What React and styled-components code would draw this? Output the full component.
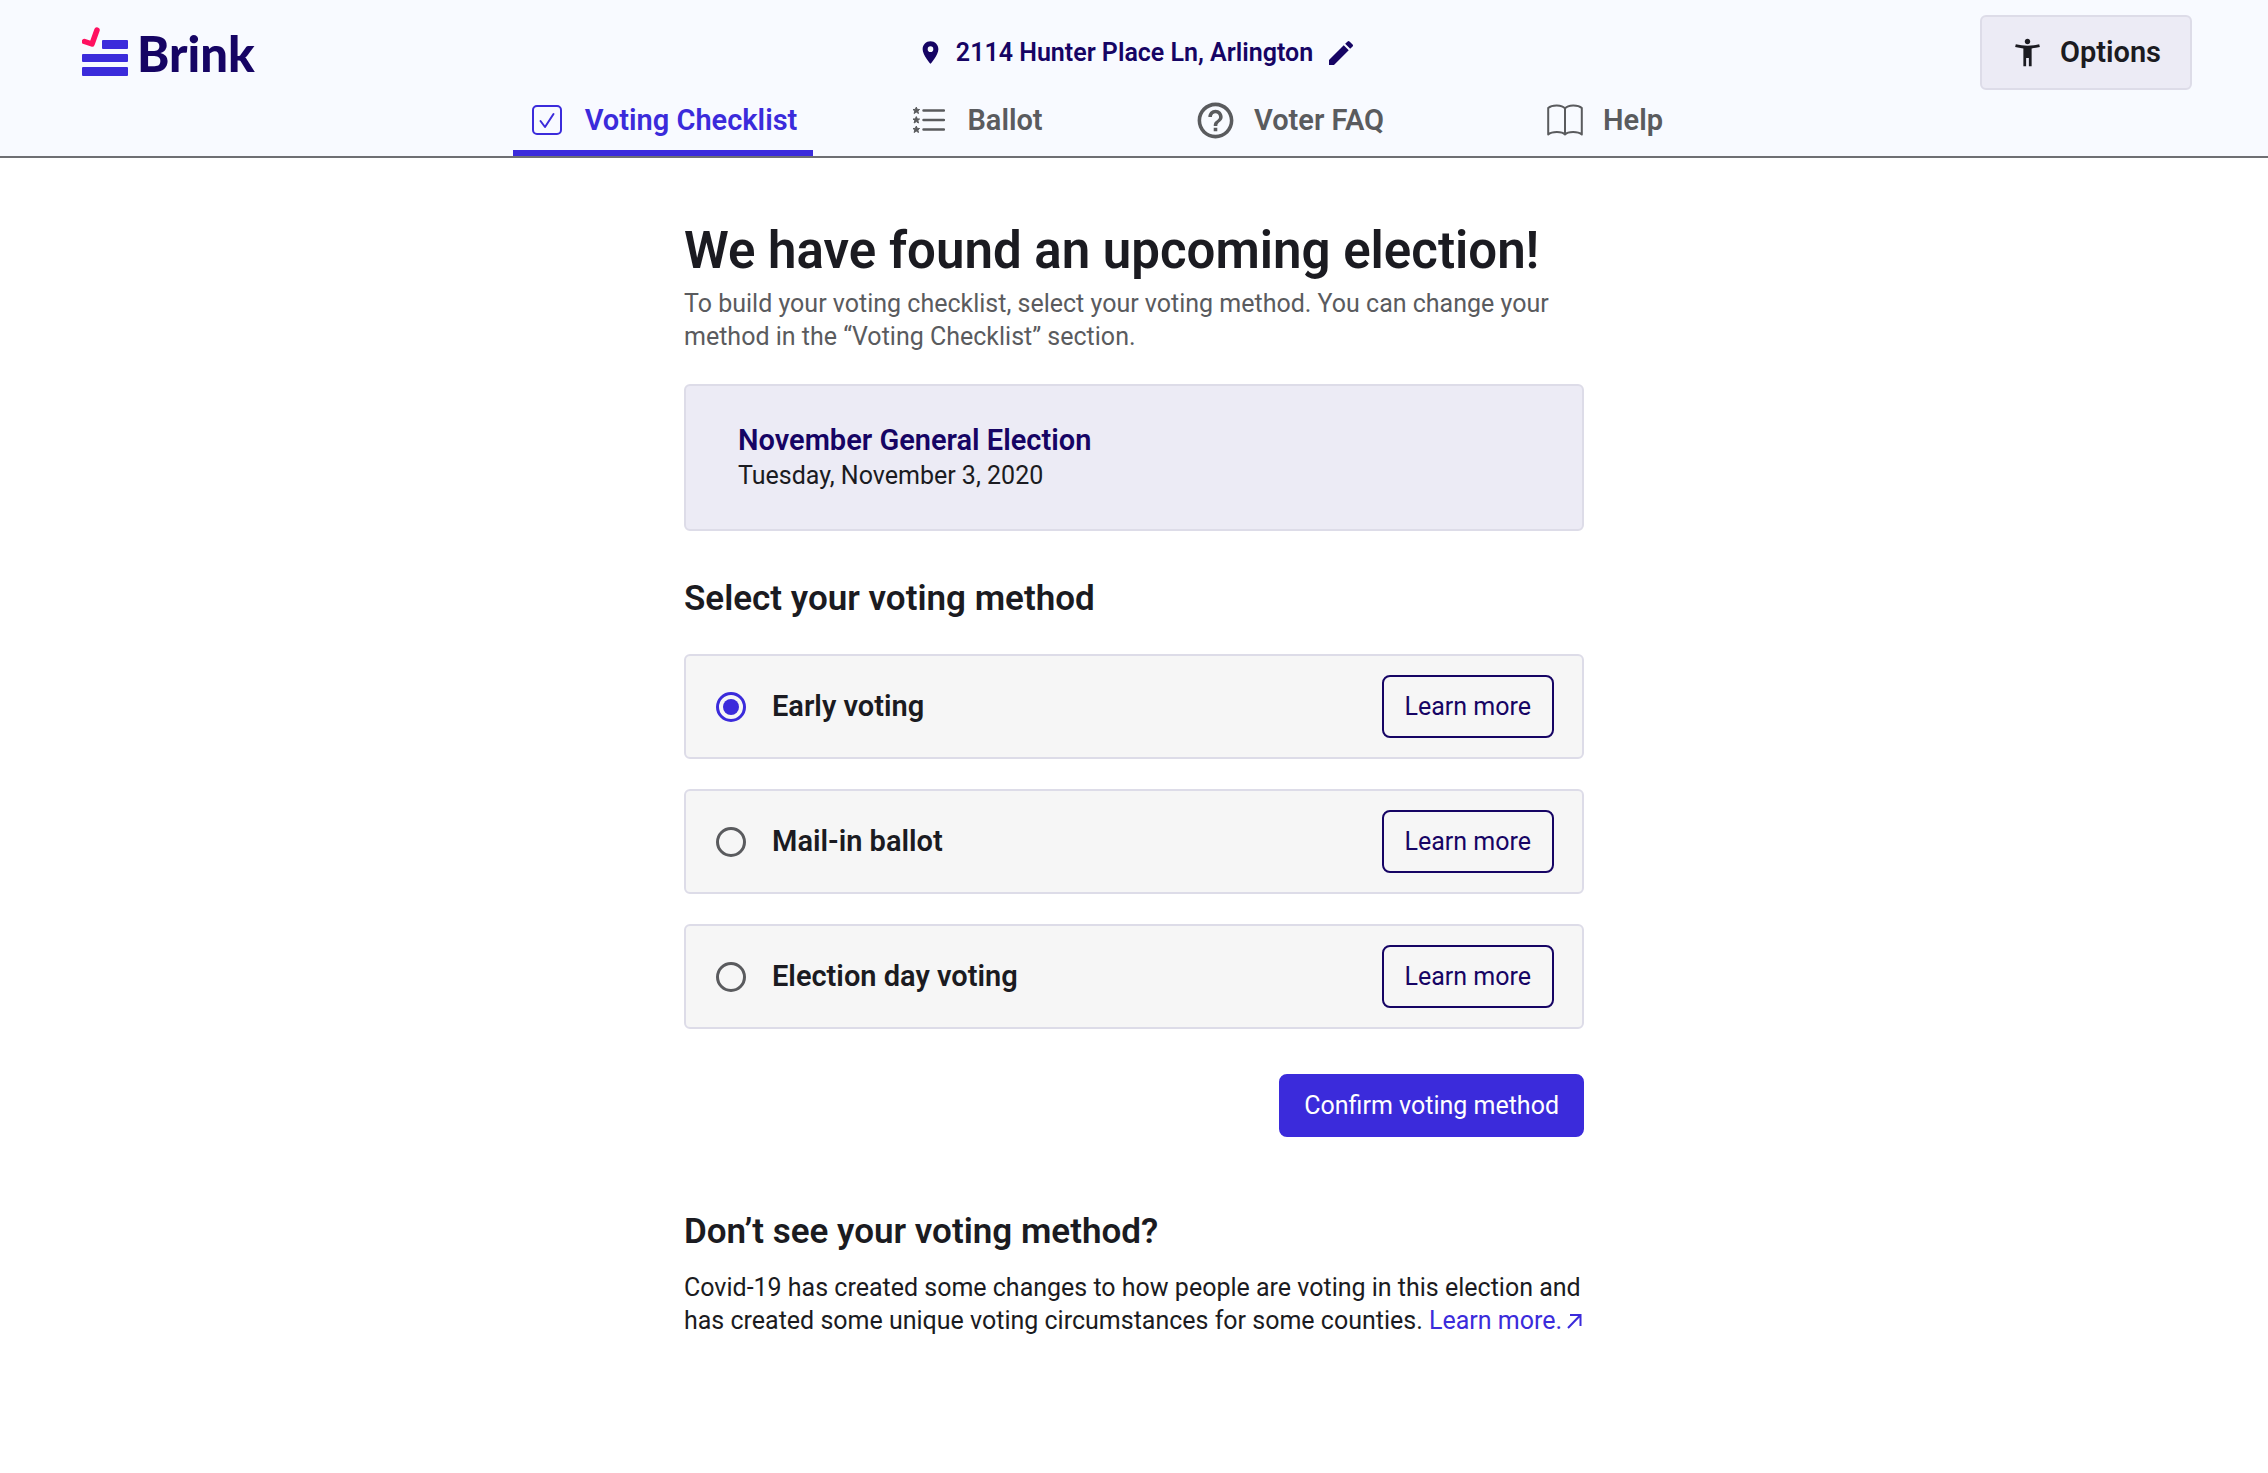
import React, { useState } from "react";
import styled, { createGlobalStyle, css } from "styled-components";
import { MdPlace, MdEdit, MdAccessibilityNew, MdHelpOutline } from "react-icons/md";

const color = {
  brand: "#3b2bdb",
  navy: "#160464",
  ink: "#1b1b21",
  muted: "#5a5b5e",
  header: "#f8faff",
  lilac: "#ecebf5",
  line: "#dddce8",
  row: "#f6f6f6",
  red: "#ff1060",
};

const GlobalStyle = createGlobalStyle`
  *, *::before, *::after { box-sizing: border-box; }
  body {
    margin: 0;
    background: #fff;
    color: ${color.ink};
    font: 400 25px/33px Roboto, sans-serif;
  }
  h1, h2, p { margin: 0; }
  button { font: inherit; cursor: pointer; }
  svg { display: block; flex: none; }
`;

const Header = styled.header`
  background: ${color.header};
  border-bottom: 2px solid #6e6f73;
`;

const TopBar = styled.div`
  display: grid;
  grid-template-columns: 1fr auto 1fr;
  align-items: center;
  padding: 15px 76px 0 82px;
`;

const Logo = styled.a`
  display: flex;
  align-items: center;
  gap: 8px;
  justify-self: start;
  color: ${color.navy};
  text-decoration: none;
`;

const LogoName = styled.span`
  font: 900 49px/60px Lato, sans-serif;
`;

const AddressButton = styled.button`
  display: flex;
  align-items: center;
  gap: 12px;
  padding: 0;
  border: 0;
  background: none;
  color: ${color.navy};
  font-weight: 600;
`;

const OptionsButton = styled.button`
  display: flex;
  align-items: center;
  justify-content: center;
  gap: 16px;
  justify-self: end;
  height: 75px;
  padding: 0 29px;
  border: 2px solid ${color.line};
  border-radius: 6px;
  background: ${color.lilac};
  color: ${color.ink};
  font-size: 29px;
  font-weight: 600;
`;

const Nav = styled.nav`
  display: flex;
  justify-content: center;
  gap: 14px;
`;

const NavItem = styled.a`
  display: flex;
  align-items: center;
  justify-content: center;
  gap: 20px;
  width: 300px;
  height: 66px;
  border-bottom: 6px solid ${(p) => (p.$active ? color.brand : "transparent")};
  color: ${(p) => (p.$active ? color.brand : color.muted)};
  font-size: 29px;
  font-weight: 600;
  text-decoration: none;
`;

const IconBox = styled.span`
  display: flex;
  justify-content: center;
  width: 36px;
`;

const Main = styled.main`
  width: 100%;
  max-width: 900px;
  margin: 0 auto;
  padding: 63px 0;
`;

const PageTitle = styled.h1`
  font-size: 51px;
  line-height: 60px;
  font-weight: 600;
`;

const Intro = styled.p`
  margin-top: 6px;
  color: ${color.muted};
`;

const Election = styled.section`
  margin-top: 31px;
  padding: 36px 52px 35px;
  border: 2px solid ${color.line};
  border-radius: 6px;
  background: ${color.lilac};
  line-height: 36px;
`;

const ElectionName = styled.h2`
  color: ${color.navy};
  font-size: 29px;
  line-height: 36px;
  font-weight: 600;
`;

const SectionTitle = styled.h2`
  font-size: 35px;
  line-height: 44px;
  font-weight: 600;
`;

const MethodForm = styled.form`
  margin-top: 46px;
`;

const Methods = styled.div`
  display: grid;
  gap: 30px;
  margin: 33px 0 45px;
`;

const Method = styled.div`
  display: flex;
  align-items: center;
  justify-content: space-between;
  padding: 19px 28px 19px 30px;
  border: 2px solid ${color.line};
  border-radius: 6px;
  background: ${color.row};
`;

const MethodLabel = styled.label`
  display: flex;
  align-items: center;
  gap: 26px;
  font-size: 29px;
  font-weight: 600;
  cursor: pointer;
`;

const Radio = styled.input`
  appearance: none;
  display: grid;
  place-items: center;
  width: 30px;
  height: 30px;
  margin: 0;
  border: 3px solid ${color.muted};
  border-radius: 50%;
  &:checked { border-color: ${color.brand}; }
  &:checked::before {
    content: "";
    width: 16px;
    height: 16px;
    border-radius: 50%;
    background: ${color.brand};
  }
`;

const Button = styled.button`
  height: 63px;
  padding: 0 21px;
  border: 2px solid ${color.navy};
  border-radius: 8px;
  background: transparent;
  color: ${color.navy};
  ${(p) =>
    p.$primary &&
    css`
      padding: 0 23px;
      border-color: ${color.brand};
      background: ${color.brand};
      color: #fff;
    `}
`;

const Actions = styled.div`
  display: flex;
  justify-content: flex-end;
`;

const Help = styled.section`
  margin-top: 73px;
`;

const HelpText = styled.p`
  margin-top: 17px;
`;

const TextLink = styled.a`
  color: ${color.brand};
  text-decoration: none;
  white-space: nowrap;
  svg { display: inline-block; margin-left: 5px; }
`;

const LogoMark = () => (
  <svg width="47" height="60" viewBox="0 0 47 60" aria-hidden="true">
    <path d="M2.5 18.500l7.500 2.500L15 7" fill="none" stroke={color.red} strokeWidth="5.500" strokeLinecap="round" strokeLinejoin="round" />
    <g fill={color.brand}>
      <rect x="20" y="17" width="26" height="9" rx="1" />
      <rect x="0" y="31" width="46" height="8" rx="1" />
      <rect x="0" y="44" width="46" height="9" rx="1" />
    </g>
  </svg>
);

const ChecklistIcon = () => (
  <svg width="30" height="30" viewBox="0 0 30 30" fill="none" stroke="currentColor" strokeWidth="2" strokeLinecap="round" strokeLinejoin="round" aria-hidden="true">
    <rect x="1" y="1" width="28" height="28" rx="4" />
    <path d="M8.500 16l4.500 6L21.500 9" />
  </svg>
);

const star = "M0-3.400L1-1.100 3.300-1 1.500.500 2.200 3 0 1.600-2.200 3-1.500.500-3.300-1-1-1.100z";

const BallotIcon = () => (
  <svg width="32" height="28" viewBox="0 0 32 28" aria-hidden="true">
    <path d="M10.500 4.500H31M10.500 14H31M10.500 23.500H31" stroke="currentColor" strokeWidth="2.500" strokeLinecap="round" />
    {[4.5, 14, 23.5].map((y) => (
      <path key={y} d={star} transform={`translate(3.300 ${y})`} fill="currentColor" stroke="currentColor" />
    ))}
  </svg>
);

const BookIcon = () => (
  <svg width="36" height="32" viewBox="0 0 36 32" fill="none" stroke="currentColor" strokeWidth="2" strokeLinecap="round" strokeLinejoin="round" aria-hidden="true">
    <path d="M18 4.500C15 .500 5 .500 1.200 4V30.500C5 27.300 15 27.300 18 30.500 21 27.300 31 27.300 34.800 30.500V4C31 .500 21 .500 18 4.500zM18 4.500V30.500" />
  </svg>
);

const ArrowIcon = () => (
  <svg width="15" height="16" viewBox="0 0 15 16" fill="none" stroke="currentColor" strokeWidth="2" aria-hidden="true">
    <path d="M1 15L13.500 2M3 2H13.500V13" />
  </svg>
);

const navItems = [
  { label: "Voting Checklist", icon: <ChecklistIcon /> },
  { label: "Ballot", icon: <BallotIcon /> },
  { label: "Voter FAQ", icon: <MdHelpOutline size={43} /> },
  { label: "Help", icon: <BookIcon /> },
];

const methods = ["Early voting", "Mail-in ballot", "Election day voting"];

export default function App() {
  const [method, setMethod] = useState(methods[0]);
  return (
    <>
      <GlobalStyle />
      <Header>
        <TopBar>
          <Logo href="#">
            <LogoMark />
            <LogoName>Brink</LogoName>
          </Logo>
          <AddressButton type="button">
            <MdPlace size={27} />
            2114 Hunter Place Ln, Arlington
            <MdEdit size={32} />
          </AddressButton>
          <OptionsButton type="button">
            <MdAccessibilityNew size={33} />
            Options
          </OptionsButton>
        </TopBar>
        <Nav>
          {navItems.map(({ label, icon }, i) => (
            <NavItem key={label} href="#" $active={i === 0}>
              <IconBox>{icon}</IconBox>
              {label}
            </NavItem>
          ))}
        </Nav>
      </Header>
      <Main>
        <PageTitle>We have found an upcoming election!</PageTitle>
        <Intro>
          To build your voting checklist, select your voting method. You can change your method in
          the “Voting Checklist” section.
        </Intro>
        <Election>
          <ElectionName>November General Election</ElectionName>
          <p>Tuesday, November 3, 2020</p>
        </Election>
        <MethodForm onSubmit={(e) => e.preventDefault()}>
          <SectionTitle id="method-title">Select your voting method</SectionTitle>
          <Methods role="radiogroup" aria-labelledby="method-title">
            {methods.map((name, i) => (
              <Method key={name}>
                <MethodLabel htmlFor={`method-${i}`}>
                  <Radio
                    type="radio"
                    id={`method-${i}`}
                    name="method"
                    checked={method === name}
                    onChange={() => setMethod(name)}
                  />
                  {name}
                </MethodLabel>
                <Button type="button">Learn more</Button>
              </Method>
            ))}
          </Methods>
          <Actions>
            <Button type="submit" $primary>
              Confirm voting method
            </Button>
          </Actions>
        </MethodForm>
        <Help>
          <SectionTitle>Don’t see your voting method?</SectionTitle>
          <HelpText>
            Covid-19 has created some changes to how people are voting in this election and has
            created some unique voting circumstances for some counties.{" "}
            <TextLink href="#">
              Learn more.
              <ArrowIcon />
            </TextLink>
          </HelpText>
        </Help>
      </Main>
    </>
  );
}
